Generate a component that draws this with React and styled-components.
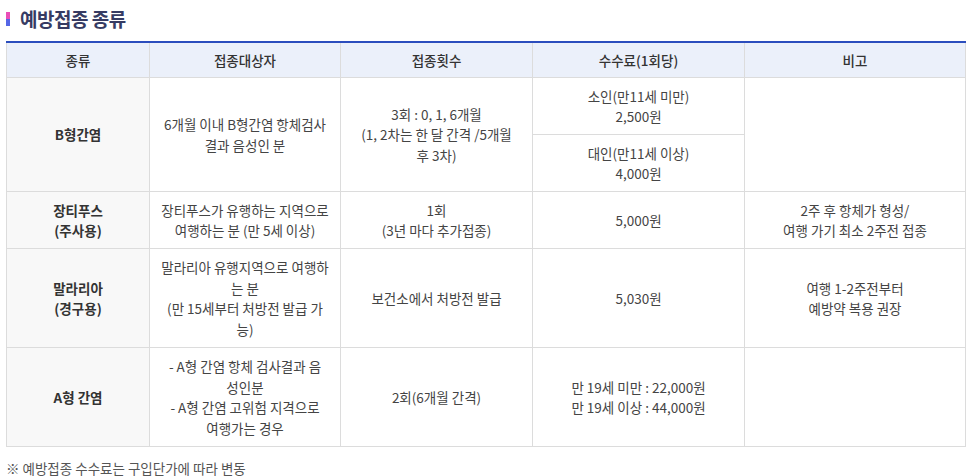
import styled, { createGlobalStyle } from "styled-components";

const Global = createGlobalStyle`
  body {
    margin: 0;
    background: #fff;
    font-family: "Noto Sans CJK KR", "Noto Sans", sans-serif;
    color: #444;
  }
`;

const Wrap = styled.div`
  padding: 6px 9px 0 6px;
`;

const Title = styled.h2`
  display: flex;
  align-items: center;
  gap: 10px;
  margin: 0 0 9px;
  font-size: 19px;
  font-weight: 700;
  color: #363b63;
  line-height: 26px;
  letter-spacing: -0.5px;
`;

const Marker = styled.span`
  width: 4px;
  height: 14px;
  background: linear-gradient(#e94fb7 0 50%, #5566e6 50% 100%);
`;

const Table = styled.table`
  width: 959px;
  border-collapse: collapse;
  table-layout: fixed;
  border-top: 2px solid #2b4dbd;
  font-size: 13.5px;
  line-height: 20.5px;
  text-align: center;
`;

const Th = styled.th`
  height: 34px;
  padding: 0;
  background: #ebf0fa;
  border: 1px solid #dcdcdc;
  border-top: none;
  font-weight: 500;
  color: #333;
`;

const Td = styled.td`
  padding: 0 4px;
  border: 1px solid #dcdcdc;
  color: #444;
  height: ${(p) => p.$h || "auto"};
  ${(p) =>
    p.$head &&
    `
    background: #f8f8f8;
    font-weight: 700;
    color: #333;
  `}
`;

const Note = styled.p`
  margin: 12px 0 0;
  font-size: 13.5px;
  line-height: 19px;
  color: #555;
`;

export default function App() {
  return (
    <Wrap>
      <Global />
      <Title>
        <Marker />
        예방접종 종류
      </Title>
      <Table>
        <colgroup>
          <col style={{ width: 143 }} />
          <col style={{ width: 191 }} />
          <col style={{ width: 192 }} />
          <col style={{ width: 212 }} />
          <col style={{ width: 221 }} />
        </colgroup>
        <thead>
          <tr>
            <Th>종류</Th>
            <Th>접종대상자</Th>
            <Th>접종횟수</Th>
            <Th>수수료(1회당)</Th>
            <Th>비고</Th>
          </tr>
        </thead>
        <tbody>
          <tr>
            <Td $head rowSpan={2}>B형간염</Td>
            <Td rowSpan={2}>
              6개월 이내 B형간염 항체검사
              <br />
              결과 음성인 분
            </Td>
            <Td rowSpan={2}>
              3회 : 0, 1, 6개월
              <br />
              (1, 2차는 한 달 간격 /5개월
              <br />후 3차)
            </Td>
            <Td $h="56px">
              소인(만11세 미만)
              <br />
              2,500원
            </Td>
            <Td rowSpan={2}></Td>
          </tr>
          <tr>
            <Td $h="56px">
              대인(만11세 이상)
              <br />
              4,000원
            </Td>
          </tr>
          <tr>
            <Td $head $h="56px">
              장티푸스
              <br />
              (주사용)
            </Td>
            <Td>
              장티푸스가 유행하는 지역으로
              <br />
              여행하는 분 (만 5세 이상)
            </Td>
            <Td>
              1회
              <br />
              (3년 마다 추가접종)
            </Td>
            <Td>5,000원</Td>
            <Td>
              2주 후 항체가 형성/
              <br />
              여행 가기 최소 2주전 접종
            </Td>
          </tr>
          <tr>
            <Td $head $h="98px">
              말라리아
              <br />
              (경구용)
            </Td>
            <Td>
              말라리아 유행지역으로 여행하
              <br />
              는 분
              <br />
              (만 15세부터 처방전 발급 가
              <br />
              능)
            </Td>
            <Td>보건소에서 처방전 발급</Td>
            <Td>5,030원</Td>
            <Td>
              여행 1-2주전부터
              <br />
              예방약 복용 권장
            </Td>
          </tr>
          <tr>
            <Td $head $h="98px">A형 간염</Td>
            <Td>
              - A형 간염 항체 검사결과 음
              <br />
              성인분
              <br />
              - A형 간염 고위험 지격으로
              <br />
              여행가는 경우
            </Td>
            <Td>2회(6개월 간격)</Td>
            <Td>
              만 19세 미만 : 22,000원
              <br />
              만 19세 이상 : 44,000원
            </Td>
            <Td></Td>
          </tr>
        </tbody>
      </Table>
      <Note>※ 예방접종 수수료는 구입단가에 따라 변동</Note>
    </Wrap>
  );
}
